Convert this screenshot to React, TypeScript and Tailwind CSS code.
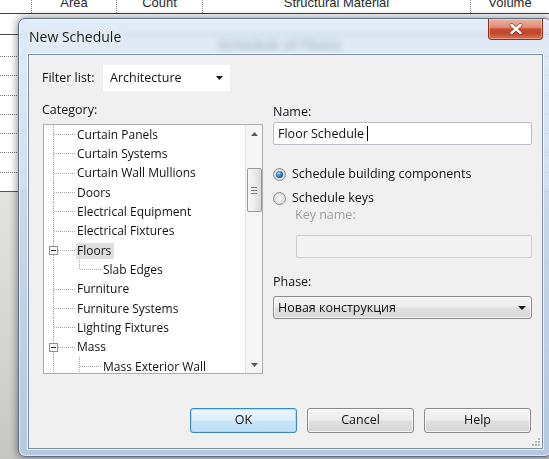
import React from "react";

const SEGOE = { fontFamily: '"Open Sans", "Noto Sans", "Liberation Sans", sans-serif' };
const ARIAL = { fontFamily: '"Liberation Sans", Arial, sans-serif' };

type Row = { label: string; level: 0 | 1; expanded?: boolean; selected?: boolean; lastChild?: boolean };

const categories: Row[] = [
  { label: "Curtain Panels", level: 0 },
  { label: "Curtain Systems", level: 0 },
  { label: "Curtain Wall Mullions", level: 0 },
  { label: "Doors", level: 0 },
  { label: "Electrical Equipment", level: 0 },
  { label: "Electrical Fixtures", level: 0 },
  { label: "Floors", level: 0, expanded: true, selected: true },
  { label: "Slab Edges", level: 1, lastChild: true },
  { label: "Furniture", level: 0 },
  { label: "Furniture Systems", level: 0 },
  { label: "Lighting Fixtures", level: 0 },
  { label: "Mass", level: 0, expanded: true },
  { label: "Mass Exterior Wall", level: 1 },
];

const ROW_H = 19.33;

function TreeLines({ row }: { row: Row }) {
  const w = row.level === 0 ? 32 : 58;
  const dot = {
    stroke: "#a5a5a5",
    strokeWidth: 1,
    strokeDasharray: "1 1",
    shapeRendering: "crispEdges" as const,
  };
  return (
    <svg width={w} height={ROW_H} className="shrink-0">
      {row.expanded ? (
        <>
          <line x1={9.5} y1={0} x2={9.5} y2={5} {...dot} />
          <line x1={9.5} y1={14} x2={9.5} y2={ROW_H} {...dot} />
          <rect x={5.5} y={5.5} width={8} height={8} fill="#f7f7f7" stroke="#919191" shapeRendering="crispEdges" />
          <line x1={7} y1={9.5} x2={12} y2={9.5} stroke="#2b2b2b" shapeRendering="crispEdges" />
          <line x1={14} y1={9.5} x2={31} y2={9.5} {...dot} />
        </>
      ) : (
        <>
          <line x1={9.5} y1={0} x2={9.5} y2={ROW_H} {...dot} />
          {row.level === 0 && <line x1={10} y1={9.5} x2={31} y2={9.5} {...dot} />}
        </>
      )}
      {row.level === 1 && (
        <>
          <line x1={35.5} y1={0} x2={35.5} y2={row.lastChild ? 9.5 : ROW_H} {...dot} />
          <line x1={36} y1={9.5} x2={57} y2={9.5} {...dot} />
        </>
      )}
    </svg>
  );
}

function DownArrow({ w = 8 }: { w?: number }) {
  return (
    <svg width={w} height={4} className="shrink-0">
      <polygon points={`0,0 ${w},0 ${w / 2},4`} fill="#111" />
    </svg>
  );
}

function SmallArrow({ up }: { up?: boolean }) {
  return (
    <svg width={7} height={4}>
      <polygon points={up ? "0,4 7,4 3.5,0" : "0,0 7,0 3.5,4"} fill="#5a5a5a" />
    </svg>
  );
}

function Radio({ checked, id }: { checked?: boolean; id: string }) {
  return (
    <svg width={13} height={13} className="shrink-0">
      <defs>
        <radialGradient id={`${id}-b`} cx="50%" cy="50%" r="55%">
          <stop offset="0" stopColor="#f8f8f8" />
          <stop offset="1" stopColor="#d4d4d4" />
        </radialGradient>
        <radialGradient id={`${id}-d`} cx="40%" cy="35%" r="70%">
          <stop offset="0" stopColor="#a8e0fb" />
          <stop offset="0.5" stopColor="#2f86c4" />
          <stop offset="1" stopColor="#124a84" />
        </radialGradient>
      </defs>
      <circle cx={6.5} cy={6.5} r={6} fill={`url(#${id}-b)`} stroke="#8c8c8c" />
      {checked && <circle cx={6.5} cy={6.5} r={3.6} fill={`url(#${id}-d)`} />}
    </svg>
  );
}

function CloseButton() {
  return (
    <div className="mr-[8px] w-[55px] h-[21px] rounded-b-[4px] border border-t-0 border-[#8a2c1e] bg-[linear-gradient(180deg,#ecb4a4_0%,#e08d76_40%,#c9492f_52%,#c4452c_70%,#db7452_100%)] shadow-[inset_0_0_0_1px_rgba(255,220,210,0.45)] flex items-center justify-center">
      <svg width={14} height={12}>
        <path d="M2.5 2 L11.5 10 M11.5 2 L2.5 10" stroke="#5a1a10" strokeWidth={4} strokeLinecap="round" opacity={0.55} />
        <path d="M2.5 2 L11.5 10 M11.5 2 L2.5 10" stroke="#ffffff" strokeWidth={2.4} strokeLinecap="round" />
      </svg>
    </div>
  );
}

function Grip() {
  const pts = [
    [7, 1],
    [7, 4],
    [4, 4],
    [7, 7],
    [4, 7],
    [1, 7],
  ];
  return (
    <svg width={10} height={10} className="absolute right-[1px] bottom-[1px]">
      {pts.map(([x, y], i) => (
        <g key={i}>
          <rect x={x + 1} y={y + 1} width={2} height={2} fill="#ffffff" />
          <rect x={x} y={y} width={2} height={2} fill="#b4b4b4" />
        </g>
      ))}
    </svg>
  );
}

function WinButton({ label, primary }: { label: string; primary?: boolean }) {
  return (
    <div
      className={
        primary
          ? "w-[107px] h-[25px] rounded-[3px] border border-[#3d86c0] bg-[linear-gradient(180deg,#eef7fd_0%,#dcedf9_48%,#c8e5f8_52%,#bde0f6_100%)] shadow-[inset_0_0_0_1px_rgba(170,220,245,0.9)] flex items-center justify-center text-[12.5px] text-[#111]"
          : "w-[107px] h-[25px] rounded-[3px] border border-[#8a8a8a] bg-[linear-gradient(180deg,#f6f6f6_0%,#ececec_48%,#e0e0e0_52%,#d6d6d6_100%)] shadow-[inset_0_0_0_1px_rgba(255,255,255,0.7)] flex items-center justify-center text-[12.5px] text-[#111]"
      }
    >
      {label}
    </div>
  );
}

function ScheduleSheet() {
  const cols = [
    { w: 31, label: "" },
    { w: 85, label: "Area" },
    { w: 86, label: "Count" },
    { w: 268, label: "Structural Material" },
    { w: 79, label: "Volume" },
  ];
  return (
    <div className="flex flex-col w-[549px] h-[459px] bg-white" style={ARIAL}>
      <div className="flex h-[14px] border-b border-[#3e3e3e] shrink-0">
        {cols.map((c, i) => (
          <div
            key={i}
            className={
              i === 0
                ? "h-full overflow-hidden flex justify-center shrink-0"
                : "h-full overflow-hidden flex justify-center shrink-0 border-l border-dotted border-[#8a8a8a]"
            }
            style={{ width: c.w }}
          >
            <span className="text-[13px] leading-[16px] -mt-[5px] text-[#2a2a2a] whitespace-nowrap">{c.label}</span>
          </div>
        ))}
      </div>
      <div className="h-[21px] border-b border-[#4a4a4a] shrink-0" />
      <div className="h-[21px] shrink-0 flex justify-center pl-[10px] items-start">
        <span className="text-[15px] leading-[16px] mt-[2px] text-[#243246] whitespace-nowrap">Schedule of Floors</span>
      </div>
      {Array.from({ length: 7 }).map((_, i) => (
        <div key={i} className="h-[19.3px] shrink-0 border-t border-dotted border-[#7a7a7a]" />
      ))}
      <div className="flex-1 border-t border-[#555] bg-[linear-gradient(180deg,#e2e2e0_0%,#d4d4d2_60%,#c6c6c3_100%)]" />
    </div>
  );
}

export default function App() {
  return (
    <div className="relative w-[549px] h-[459px] overflow-hidden bg-white" style={SEGOE}>
      <ScheduleSheet />

      {/* New Schedule dialog */}
      <div className="absolute left-[18px] top-[18px] w-[534px] h-[439px] rounded-[7px] border border-[#5d6f86] bg-[linear-gradient(180deg,rgba(214,228,244,0.7)_0%,rgba(192,211,234,0.8)_50%,rgba(180,201,227,0.86)_100%)] backdrop-blur-[3px] shadow-[0_0_7px_2px_rgba(0,0,0,0.35),inset_0_0_0_1px_rgba(255,255,255,0.55)] flex flex-col">
        <div className="h-[35px] shrink-0 flex items-start justify-between">
          <div className="h-full flex items-center pl-[10px] text-[14px] text-[#161616] [text-shadow:0_0_6px_rgba(255,255,255,0.9)]">
            New Schedule
          </div>
          <CloseButton />
        </div>

        <div className="relative ml-[9px] mr-[8px] h-[395px] border border-[#7f91a9] bg-[#f0f0f0] shadow-[0_0_0_1px_rgba(255,255,255,0.65)] text-[#111]">
          <div className="flex flex-col pl-[13px] pt-[10px]">
            {/* filter */}
            <div className="flex items-center h-[26px]">
              <span className="w-[61px] text-[12.5px] leading-[16px]">Filter list:</span>
              <div className="w-[127px] h-[26px] bg-white flex items-center justify-between pl-[7px] pr-[7px]">
                <span className="text-[12.5px] leading-[16px]">Architecture</span>
                <DownArrow w={7} />
              </div>
            </div>

            <div className="flex mt-[11px] gap-[10px]">
              {/* category tree */}
              <div className="w-[221px] flex flex-col">
                <span className="h-[16px] text-[12.5px] leading-[16px]">Category:</span>
                <div className="mt-[6px] ml-[1px] w-[220px] h-[250px] border border-[#abadb3] bg-white flex overflow-hidden">
                  <div className="flex-1 flex flex-col overflow-hidden">
                    {categories.map((r) => (
                      <div key={r.label} className="flex items-center shrink-0" style={{ height: ROW_H }}>
                        <TreeLines row={r} />
                        <span
                          className={
                            r.selected
                              ? "text-[12px] leading-[16px] whitespace-nowrap bg-[#dfdfdf] pl-[1px] pr-[3px]"
                              : "text-[12px] leading-[16px] whitespace-nowrap pl-[1px]"
                          }
                        >
                          {r.label}
                        </span>
                      </div>
                    ))}
                  </div>
                  <div className="w-[17px] shrink-0 bg-[#f6f6f6] border-l border-[#e4e4e4] flex flex-col items-center">
                    <div className="h-[17px] flex items-center justify-center">
                      <SmallArrow up />
                    </div>
                    <div className="mt-[26px] w-[15px] h-[44px] rounded-[2px] border border-[#999] bg-[linear-gradient(90deg,#f7f7f7_0%,#ebebeb_50%,#dadada_100%)] flex flex-col items-center justify-center gap-[2px]">
                      <div className="w-[6px] h-[1px] bg-[#7a7a7a]" />
                      <div className="w-[6px] h-[1px] bg-[#7a7a7a]" />
                      <div className="w-[6px] h-[1px] bg-[#7a7a7a]" />
                    </div>
                    <div className="flex-1" />
                    <div className="h-[17px] flex items-center justify-center">
                      <SmallArrow />
                    </div>
                  </div>
                </div>
              </div>

              {/* name / type / phase */}
              <div className="w-[259px] flex flex-col pt-[2px]">
                <span className="h-[16px] text-[12.5px] leading-[16px]">Name:</span>
                <div className="mt-[2px] h-[23px] rounded-[2px] border border-[#b8bcc5] bg-white flex items-center pl-[4px]">
                  <span className="text-[12.5px] leading-[16px] whitespace-pre">Floor Schedule </span>
                  <div className="w-[1px] h-[15px] bg-black" />
                </div>

                <div className="mt-[20px] h-[18px] flex items-center gap-[6px]">
                  <Radio checked id="r1" />
                  <span className="text-[12.5px] leading-[16px]">Schedule building components</span>
                </div>
                <div className="mt-[6px] h-[18px] flex items-center gap-[6px]">
                  <Radio id="r2" />
                  <span className="text-[12.5px] leading-[16px]">Schedule keys</span>
                </div>
                <span className="ml-[22px] h-[16px] text-[12.5px] leading-[16px] text-[#9d9d9d]">Key name:</span>
                <div className="mt-[12px] ml-[23px] h-[23px] rounded-[2px] border border-[#cdcdcd] bg-[#f3f3f3]" />

                <span className="mt-[16px] h-[16px] text-[12.5px] leading-[16px]">Phase:</span>
                <div className="mt-[6px] h-[23px] rounded-[3px] border border-[#8c8c8c] bg-[linear-gradient(180deg,#f5f5f5_0%,#ebebeb_48%,#e0e0e0_52%,#d8d8d8_100%)] shadow-[inset_0_0_0_1px_rgba(255,255,255,0.7)] flex items-center justify-between pl-[4px] pr-[5px]">
                  <span className="text-[12.5px] leading-[16px]">Новая конструкция</span>
                  <DownArrow w={8} />
                </div>
              </div>
            </div>

            {/* buttons */}
            <div className="mt-[34px] flex justify-end gap-[10px] pr-[11px]">
              <WinButton label="OK" primary />
              <WinButton label="Cancel" />
              <WinButton label="Help" />
            </div>
          </div>
          <Grip />
        </div>
      </div>
    </div>
  );
}
